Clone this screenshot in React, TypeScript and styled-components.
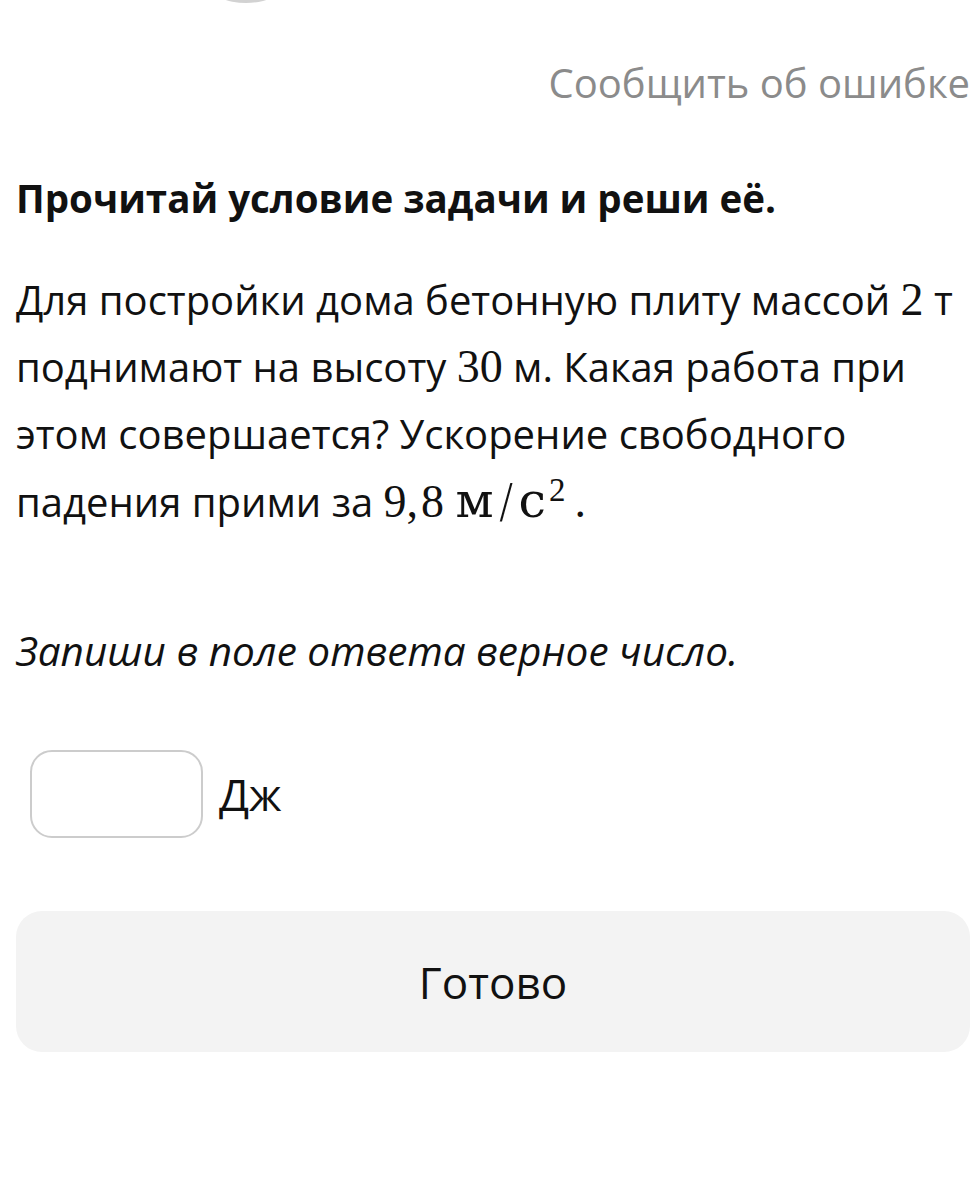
import React from "react";
import styled, { createGlobalStyle } from "styled-components";

const GlobalStyle = createGlobalStyle`
  html, body {
    margin: 0;
    padding: 0;
    background: #ffffff;
  }
  body {
    font-family: "Open Sans", "Noto Sans", sans-serif;
    color: #111111;
  }
`;

const Page = styled.div`
  width: 972px;
  min-height: 1197px;
  box-sizing: border-box;
  padding: 0 2px 0 16px;
  overflow: hidden;
`;

const TopBar = styled.div`
  height: 110px;
  display: flex;
  flex-direction: column;
`;

const Avatar = styled.div`
  width: 140px;
  height: 140px;
  margin: -137px 0 0 160px;
  border-radius: 50%;
  background: #d2d2d2;
  flex-shrink: 0;
`;

const ReportLink = styled.a`
  align-self: flex-end;
  margin-top: 56px;
  font-size: 40px;
  line-height: 48px;
  color: #8b8b8b;
  text-decoration: none;
`;

const Heading = styled.h1`
  margin: 64px 0 0;
  font-size: 38.5px;
  line-height: 48px;
  font-weight: 700;
`;

const Problem = styled.p`
  margin: 44px 0 0;
  font-size: 40px;
  line-height: 67px;
  white-space: nowrap;
`;

const Tex = styled.span`
  font-family: "Liberation Serif", "DejaVu Serif", serif;
  font-size: 46px;
`;

const Comma = styled.span`
  margin-right: 3px;
`;

const Cyr = styled.span`
  font-family: "DejaVu Serif", "Liberation Serif", serif;
  font-size: 49px;
`;

const Slash = styled.span`
  display: inline-block;
  margin: 0 6px;
  transform: scaleY(1.25);
`;

const Sup = styled.sup`
  font-size: 33px;
  line-height: 0;
  margin: 0 9px 0 3px;
`;

const Instruction = styled.p`
  margin: 92px 0 0;
  font-size: 40.5px;
  line-height: 48px;
  font-style: italic;
`;

const AnswerRow = styled.div`
  display: flex;
  align-items: center;
  gap: 16px;
  margin: 75px 0 0 14px;
`;

const AnswerInput = styled.input`
  width: 173px;
  height: 88px;
  box-sizing: border-box;
  border: 2px solid #cccccc;
  border-radius: 22px;
  background: #ffffff;
  outline: none;
`;

const Unit = styled.span`
  font-size: 44px;
`;

const DoneButton = styled.button`
  display: flex;
  align-items: center;
  justify-content: center;
  width: 100%;
  height: 141px;
  margin-top: 73px;
  border: none;
  border-radius: 26px;
  background: #f3f3f3;
  font-family: "Open Sans", "Noto Sans", sans-serif;
  font-size: 44px;
  color: #111111;
`;

export default function App() {
  return (
    <>
      <GlobalStyle />
      <Page>
        <TopBar>
          <Avatar />
          <ReportLink href="#">Сообщить об ошибке</ReportLink>
        </TopBar>

        <Heading>Прочитай условие задачи и реши её.</Heading>

        <Problem>
          Для постройки дома бетонную плиту массой <Tex>2</Tex> т
          <br />
          поднимают на высоту <Tex>30</Tex> м. Какая работа при
          <br />
          этом совершается? Ускорение свободного
          <br />
          падения прими за{" "}
          <Tex>
            9<Comma>,</Comma>8 <Cyr>м</Cyr>
            <Slash>/</Slash>
            <Cyr>с</Cyr>
            <Sup>2</Sup>.
          </Tex>
        </Problem>

        <Instruction>Запиши в поле ответа верное число.</Instruction>

        <AnswerRow>
          <AnswerInput type="text" />
          <Unit>Дж</Unit>
        </AnswerRow>

        <DoneButton>Готово</DoneButton>
      </Page>
    </>
  );
}
